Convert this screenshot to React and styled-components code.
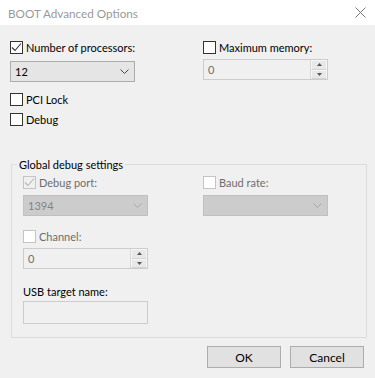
import React from "react";
import styled, { createGlobalStyle } from "styled-components";

const GlobalStyle = createGlobalStyle`
  body {
    margin: 0;
    background: #f0f0f0;
    font-family: "Lato", "Liberation Sans", sans-serif;
    font-size: 11px;
    color: #000;
  }
`;

const Window = styled.div`
  width: 375px;
  height: 378px;
  background: #f0f0f0;
  overflow: hidden;
`;

const TitleBar = styled.div`
  height: 25px;
  background: #fff;
  display: flex;
  align-items: center;
  justify-content: space-between;
  padding: 0 9px 0 8px;
`;

const Title = styled.span`
  color: #9a9a9a;
  font-size: 11.7px;
`;

const Body = styled.div`
  padding: 14px 8px 0 10px;
`;

const TopGrid = styled.div`
  display: grid;
  grid-template-columns: ${(p) => p.$left}px 1fr;
`;

const Column = styled.div`
  display: flex;
  flex-direction: column;
`;

const CheckRow = styled.label`
  display: flex;
  align-items: center;
  height: 17px;
  gap: 3px;
  color: ${(p) => (p.$disabled ? "#6d6d6d" : "#000")};
  margin-top: ${(p) => p.$mt || 0}px;
`;

const BoxFrame = styled.span`
  width: 11px;
  height: 11px;
  border: 1px solid ${(p) => (p.$disabled ? "#c4c4c4" : "#333")};
  background: ${(p) => (p.$disabled && p.$checked ? "#f0f0f0" : "#fff")};
  display: inline-flex;
  align-items: center;
  justify-content: center;
  flex: none;
`;

const CheckBox = ({ checked, disabled }) => (
  <BoxFrame $checked={checked} $disabled={disabled}>
    {checked && (
      <svg width="11" height="11" viewBox="0 0 11 11">
        <polyline
          points="1,5.5 4,8.5 10,1.5"
          fill="none"
          stroke={disabled ? "#b8b8b8" : "#333"}
          strokeWidth="1.1"
        />
      </svg>
    )}
  </BoxFrame>
);

const SelectBox = styled.div`
  box-sizing: border-box;
  width: 125px;
  height: 21px;
  margin-top: ${(p) => p.$mt || 0}px;
  border: 1px solid ${(p) => (p.$disabled ? "#c0c0c0" : "#acacac")};
  background: ${(p) => (p.$disabled ? "#cccccc" : "#e5e5e5")};
  color: ${(p) => (p.$disabled ? "#838383" : "#000")};
  display: flex;
  align-items: center;
  justify-content: space-between;
  padding: 0 5px 0 4px;
`;

const Select = ({ value, disabled, mt }) => (
  <SelectBox $disabled={disabled} $mt={mt}>
    <span>{value}</span>
    <svg width="9" height="5" viewBox="0 0 9 5">
      <polyline
        points="0.5,0.5 4.5,4.5 8.5,0.5"
        fill="none"
        stroke={disabled ? "#a8a8a8" : "#444"}
        strokeWidth="1"
      />
    </svg>
  </SelectBox>
);

const SpinBox = styled.div`
  box-sizing: border-box;
  width: 125px;
  height: 21px;
  margin-top: ${(p) => p.$mt || 0}px;
  border: 1px solid #cccccc;
  background: #f0f0f0;
  color: #6d6d6d;
  display: flex;
  align-items: center;
`;

const SpinValue = styled.span`
  flex: 1;
  padding-left: 4px;
`;

const SpinButtons = styled.div`
  display: flex;
  flex-direction: column;
  width: 16px;
  height: 100%;
  border-left: 1px solid #d8d8d8;
`;

const SpinBtn = styled.div`
  flex: 1;
  display: flex;
  align-items: center;
  justify-content: center;
  background: #e8e8e8;
  border: 1px solid #f7f7f7;
  border-bottom-color: #d4d4d4;
`;

const Arrow = ({ down }) => (
  <svg width="5" height="3" viewBox="0 0 5 3">
    <polygon points={down ? "0,0 5,0 2.5,3" : "0,3 5,3 2.5,0"} fill="#555" />
  </svg>
);

const Spin = ({ value, mt }) => (
  <SpinBox $mt={mt}>
    <SpinValue>{value}</SpinValue>
    <SpinButtons>
      <SpinBtn>
        <Arrow />
      </SpinBtn>
      <SpinBtn>
        <Arrow down />
      </SpinBtn>
    </SpinButtons>
  </SpinBox>
);

const Group = styled.fieldset`
  margin: 29px 0 0 1px;
  padding: 2px 11px 13px 11px;
  border: 1px solid #dcdcdc;
  min-width: 0;
`;

const Legend = styled.legend`
  padding: 0 2px;
  margin-left: -6px;
  line-height: 15px;
`;

const FieldLabel = styled.div`
  margin-top: 15px;
  line-height: 15px;
`;

const TextBox = styled.div`
  box-sizing: border-box;
  width: 125px;
  height: 23px;
  margin-top: 2px;
  border: 1px solid #cccccc;
  background: #f0f0f0;
`;

const ButtonBar = styled.div`
  display: flex;
  justify-content: flex-end;
  gap: 9px;
  margin: 8px 3px 0 0;
`;

const Button = styled.button`
  box-sizing: border-box;
  width: 74px;
  height: 22px;
  border: 1px solid #adadad;
  background: #e1e1e1;
  font: inherit;
  font-size: 12px;
  color: #000;
  padding: 0;
`;

export default function App() {
  return (
    <Window>
      <GlobalStyle />
      <TitleBar>
        <Title>BOOT Advanced Options</Title>
        <svg width="11" height="11" viewBox="0 0 11 11">
          <path d="M0.5 0.5 L10.5 10.5 M10.5 0.5 L0.5 10.5" stroke="#777" strokeWidth="1" />
        </svg>
      </TitleBar>
      <Body>
        <TopGrid $left={193}>
          <Column>
            <CheckRow>
              <CheckBox checked />
              Number of processors:
            </CheckRow>
            <Select value="12" mt={5} />
            <CheckRow $mt={9}>
              <CheckBox />
              PCI Lock
            </CheckRow>
            <CheckRow $mt={3}>
              <CheckBox />
              Debug
            </CheckRow>
          </Column>
          <Column>
            <CheckRow>
              <CheckBox />
              Maximum memory:
            </CheckRow>
            <Spin value="0" mt={3} />
          </Column>
        </TopGrid>

        <Group>
          <Legend>Global debug settings</Legend>
          <TopGrid $left={180}>
            <Column>
              <CheckRow $disabled>
                <CheckBox checked disabled />
                Debug port:
              </CheckRow>
              <Select value="1394" disabled mt={4} />
              <CheckRow $disabled $mt={12}>
                <CheckBox disabled />
                Channel:
              </CheckRow>
              <Spin value="0" mt={3} />
              <FieldLabel>USB target name:</FieldLabel>
              <TextBox />
            </Column>
            <Column>
              <CheckRow $disabled>
                <CheckBox disabled />
                Baud rate:
              </CheckRow>
              <Select value="" disabled mt={4} />
            </Column>
          </TopGrid>
        </Group>

        <ButtonBar>
          <Button>OK</Button>
          <Button>Cancel</Button>
        </ButtonBar>
      </Body>
    </Window>
  );
}
